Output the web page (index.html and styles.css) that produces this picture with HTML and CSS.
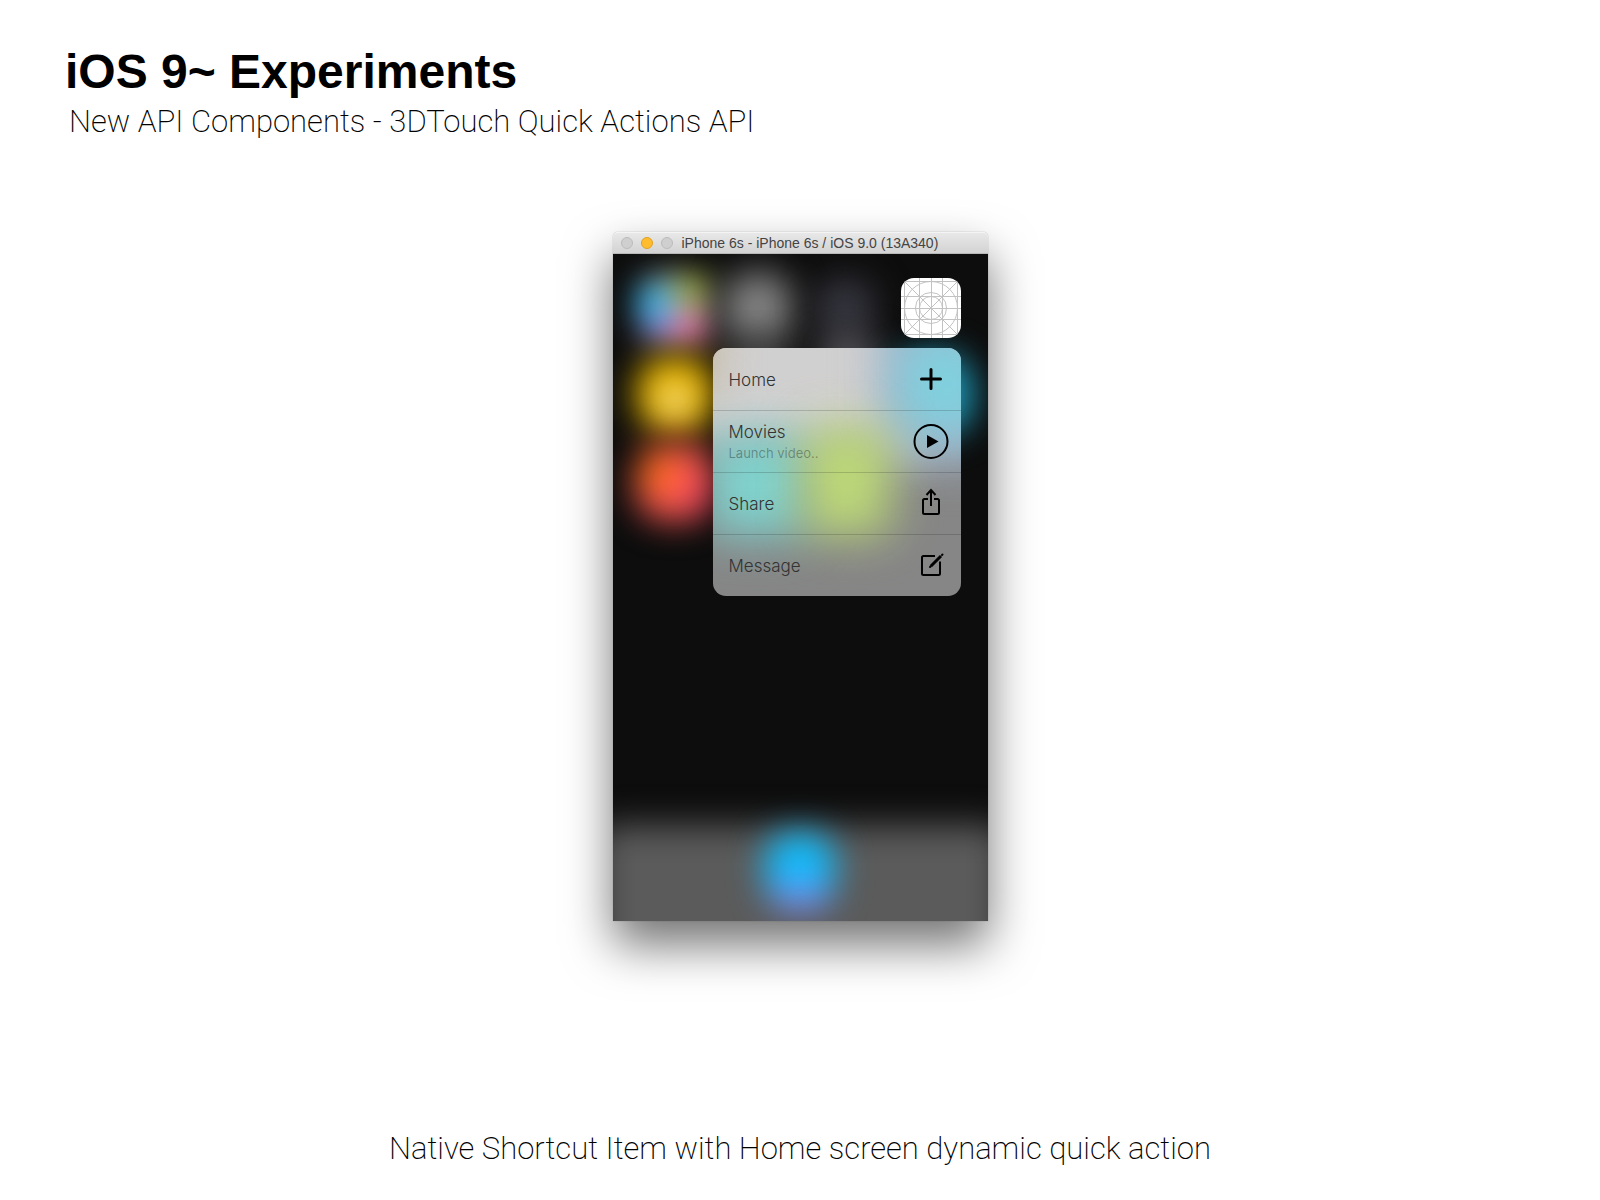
FILE: index.html
```html
<!DOCTYPE html>
<html lang="en">
<head>
<meta charset="utf-8">
<meta name="viewport" content="width=device-width, initial-scale=1">
<title>iOS 9~ Experiments</title>
<link rel="stylesheet" href="styles.css">
</head>
<body>
<header class="intro">
  <h1 class="intro-title">iOS 9~ Experiments</h1>
  <p class="intro-subtitle">New API Components - 3DTouch Quick Actions API</p>
</header>

<main class="stage">
  <section class="simulator" aria-label="iPhone simulator">
    <div class="titlebar">
      <span class="lights">
        <button class="light" type="button" aria-label="Close"></button>
        <button class="light light-minimize" type="button" aria-label="Minimize"></button>
        <button class="light" type="button" aria-label="Zoom"></button>
      </span>
      <span class="titlebar-text">iPhone 6s - iPhone 6s / iOS 9.0 (13A340)</span>
    </div>

    <div class="screen">
      <svg class="wallpaper" viewBox="0 0 375 667" preserveAspectRatio="none" aria-hidden="true">
        <defs>
          <filter id="soft" x="-100%" y="-100%" width="300%" height="300%" color-interpolation-filters="sRGB"><feGaussianBlur stdDeviation="17"/></filter>
          <filter id="mix" x="-100%" y="-100%" width="300%" height="300%" color-interpolation-filters="sRGB"><feGaussianBlur stdDeviation="15"/></filter>
          <filter id="dock-soft" x="-20%" y="-60%" width="140%" height="220%" color-interpolation-filters="sRGB"><feGaussianBlur stdDeviation="17"/></filter>
        </defs>
        <!-- home screen icons, out of focus -->
        <g filter="url(#mix)">
          <rect x="25" y="18" width="74" height="74" rx="24" fill="#8a8e8a"/>
          <rect x="24" y="32" width="34" height="34" fill="#3cb8ec"/>
          <rect x="64" y="20" width="30" height="32" fill="#a4b048"/>
          <rect x="58" y="60" width="36" height="28" fill="#f47cac"/>
          <rect x="32" y="66" width="26" height="22" fill="#8878d8"/>
        </g>
        <rect x="110" y="18" width="70" height="72" rx="28" fill="#808080" filter="url(#soft)"/>
        <rect x="120" y="86" width="50" height="30" fill="#505050" filter="url(#soft)"/>
        <rect x="202" y="24" width="60" height="60" rx="24" fill="#363640" filter="url(#soft)"/>
        <rect x="208" y="84" width="54" height="34" fill="#606066" filter="url(#soft)"/>
        <rect x="24" y="102" width="76" height="76" rx="30" fill="#ecb800" filter="url(#soft)"/>
        <circle cx="62" cy="147" r="15" fill="#f0dc98" filter="url(#mix)"/>
        <g filter="url(#soft)">
          <rect x="23" y="189" width="78" height="78" rx="30" fill="#fc5850"/>
          <rect x="30" y="204" width="30" height="28" rx="8" fill="#ff7800"/>
          <rect x="72" y="224" width="24" height="34" rx="8" fill="#f84868"/>
        </g>
        <rect x="278" y="100" width="82" height="80" rx="30" fill="#1f9cbc" filter="url(#soft)"/>
        <!-- dock -->
        <rect x="-16" y="571" width="407" height="140" rx="14" fill="#5b5b5b" filter="url(#dock-soft)"/>
        <g filter="url(#soft)">
          <rect x="152" y="579" width="70" height="74" rx="28" fill="#10bcfc"/>
          <rect x="160" y="630" width="54" height="26" rx="10" fill="#7890f8"/>
        </g>
      </svg>

      <div class="springboard">
        <button class="app-icon" type="button" aria-label="App">
          <svg viewBox="0 0 60 60" fill="none" stroke="#c2c2c2" stroke-width="1" aria-hidden="true">
            <path d="M3.5 0v60M18.500 0v60M30.500 0v60M41.500 0v60M56.500 0v60M0 3.500h60M0 18.500h60M0 30.500h60M0 41.500h60M0 56.500h60M0 0l60 60M60 0L0 60"/>
            <circle cx="30" cy="30" r="26.500"/>
            <circle cx="30" cy="30" r="15.500"/>
            <circle cx="30" cy="30" r="11.500"/>
          </svg>
        </button>

        <div class="menu">
          <svg class="menu-tint" viewBox="0 0 248 248" preserveAspectRatio="none" aria-hidden="true">
            <defs>
              <filter id="tint" x="-100%" y="-100%" width="300%" height="300%" color-interpolation-filters="sRGB"><feGaussianBlur stdDeviation="23"/></filter>
            </defs>
            <rect width="248" height="248" fill="#868686"/>
            <rect x="-70" y="-70" width="290" height="172" fill="#d1d0d0" filter="url(#tint)"/>
            <rect x="-70" y="-70" width="70" height="116" fill="#c2b496" filter="url(#tint)"/>
            <rect x="168" y="-70" width="160" height="184" rx="20" fill="#a2b2c8" filter="url(#tint)"/>
            <rect x="186" y="-14" width="94" height="100" rx="20" fill="#80d0de" filter="url(#tint)"/>
            <rect x="-6" y="86" width="100" height="102" rx="14" fill="#80d2ce" filter="url(#tint)"/>
            <rect x="90" y="78" width="88" height="110" rx="20" fill="#bcd878" filter="url(#tint)"/>
          </svg>
          <button class="menu-item" type="button">
            <span class="menu-label">Home</span>
            <svg class="menu-icon" viewBox="0 0 36 36" fill="none" stroke="#000" stroke-width="3" stroke-linecap="round" aria-hidden="true">
              <path d="M18 8.500v19M8.500 18h19"/>
            </svg>
          </button>
          <button class="menu-item" type="button">
            <span class="menu-label">Movies<span class="menu-note">Launch video..</span></span>
            <svg class="menu-icon" viewBox="0 0 36 36" fill="none" stroke="#000" stroke-width="2" aria-hidden="true">
              <circle cx="18" cy="17.500" r="16.500"/>
              <path d="M14 11v13l11.500-6.500z" fill="#000" stroke="none"/>
            </svg>
          </button>
          <button class="menu-item" type="button">
            <span class="menu-label">Share</span>
            <svg class="menu-icon" viewBox="0 0 36 36" fill="none" stroke="#000" stroke-width="2" aria-hidden="true">
              <path d="M15 13H11.500Q10 13 10 14.500V26.500Q10 28 11.500 28H24.500Q26 28 26 26.500V14.500Q26 13 24.500 13H21M18 20V4.500M13.500 9L18 4L22.500 9"/>
            </svg>
          </button>
          <button class="menu-item" type="button">
            <span class="menu-label">Message</span>
            <svg class="menu-icon" viewBox="0 0 36 36" fill="none" stroke="#000" stroke-width="2" aria-hidden="true">
              <path d="M22 8H10.500Q9 8 9 9.500V25.500Q9 27 10.500 27H25.500Q27 27 27 25.500V13.500"/>
              <path d="M18 18L28 8" stroke-width="3"/>
              <path d="M17 19l1-1M29 7l.5-.5" stroke-width="2" stroke-linecap="round"/>
            </svg>
          </button>
        </div>
      </div>
    </div>
  </section>
</main>

<footer class="caption">Native Shortcut Item with Home screen dynamic quick action</footer>
</body>
</html>
```
FILE: styles.css
```css
* { box-sizing: border-box; }

body {
  margin: 0;
  min-height: 100vh;
  display: flex;
  flex-direction: column;
  background: #fff;
  color: #000;
  font-family: "Liberation Sans", Arial, sans-serif;
}

button {
  margin: 0;
  padding: 0;
  border: 0;
  background: none;
  color: inherit;
  font: inherit;
}

.intro { padding: 44px 65px 0; }

.intro-title {
  margin: 0;
  font-size: 48px;
  line-height: 56px;
  font-weight: 700;
}

.intro-subtitle {
  margin: 0;
  padding: 0 4px;
  font-family: Roboto, sans-serif;
  font-size: 31px;
  line-height: 44px;
  font-weight: 200;
}

.stage {
  flex: 1;
  display: flex;
  justify-content: center;
  align-items: flex-start;
  padding: 88px 16px;
}

.simulator {
  width: 100%;
  max-width: 375px;
  border-radius: 5px 5px 0 0;
  box-shadow: 0 0 1px rgba(0, 0, 0, .5), 0 24px 48px rgba(0, 0, 0, .55);
}

.titlebar {
  display: flex;
  align-items: center;
  gap: 9px;
  height: 22px;
  padding: 0 8px;
  border-radius: 5px 5px 0 0;
  border-top: 1px solid #f4f4f4;
  border-bottom: 1px solid #b8b8b8;
  background: linear-gradient(#e8e8e8, #d3d3d3);
}

.lights { display: flex; gap: 8px; }

.light {
  width: 12px;
  height: 12px;
  border: 1px solid #bcbcbc;
  border-radius: 50%;
  background: #cfcfcf;
}

.light-minimize { border-color: #e0a023; background: #ffbd2e; }

.titlebar-text {
  color: #444;
  font-size: 14px;
  line-height: 20px;
  white-space: nowrap;
}

.screen {
  position: relative;
  aspect-ratio: 375 / 667;
  overflow: hidden;
  background: #0d0d0d;
}

.wallpaper {
  position: absolute;
  inset: 0;
  width: 100%;
  height: 100%;
}

.springboard {
  position: relative;
  display: flex;
  flex-direction: column;
  align-items: flex-end;
  gap: 10px;
  padding: 24px 27px;
}

.app-icon {
  width: 60px;
  height: 60px;
  border-radius: 13px;
  overflow: hidden;
  background: #fff;
}

.app-icon svg { display: block; }

.menu {
  position: relative;
  width: 248px;
  border-radius: 13px;
  overflow: hidden;
}

.menu-tint {
  position: absolute;
  inset: 0;
  width: 100%;
  height: 100%;
}

.menu-item {
  position: relative;
  display: flex;
  align-items: center;
  justify-content: space-between;
  width: 100%;
  height: 62px;
  padding: 0 12px 0 16px;
  color: #333;
  font-family: Inter, sans-serif;
  font-size: 17px;
  line-height: 21px;
  font-weight: 350;
  text-align: left;
}

.menu-item + .menu-item { border-top: 1px solid rgba(0, 0, 0, .16); }

.menu-label { padding-top: 2px; }

.menu-note {
  display: block;
  color: rgba(0, 0, 0, .32);
  font-size: 13px;
  font-weight: 400;
}

.menu-icon { width: 36px; height: 36px; }

.caption {
  padding: 0 16px 30px;
  font-family: Roboto, sans-serif;
  font-size: 31px;
  line-height: 42px;
  font-weight: 200;
  text-align: center;
}
```
